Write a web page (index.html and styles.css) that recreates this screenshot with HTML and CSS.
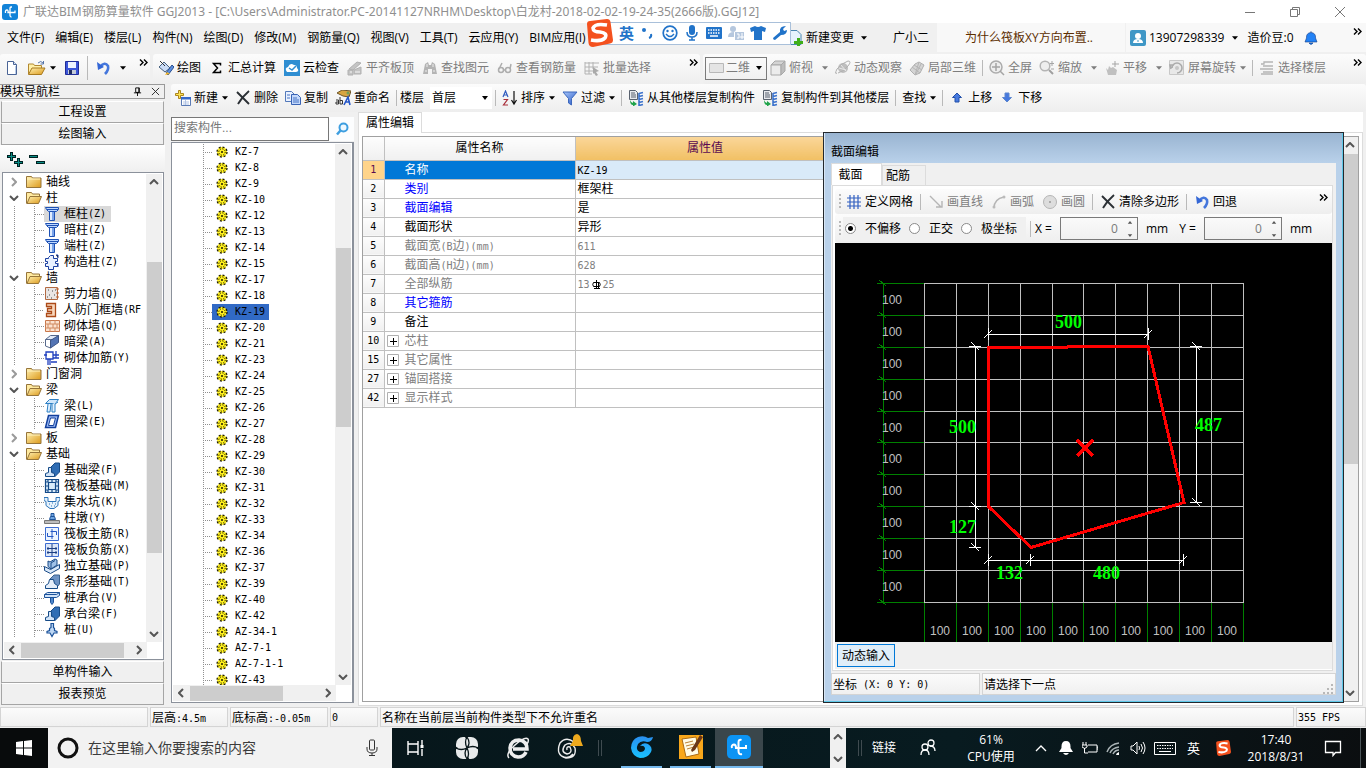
FILE: index.html
```html
<!DOCTYPE html>
<html lang="zh-CN">
<head>
<meta charset="utf-8">
<meta name="viewport" content="width=device-width, initial-scale=1">
<title>广联达BIM钢筋算量软件 GGJ2013</title>
<link rel="stylesheet" href="styles.css">
</head>
<body>
<svg class="defs" aria-hidden="true">
  <defs>
    <linearGradient id="gold" x1="0" y1="0" x2="1" y2="1"><stop offset="0" stop-color="#fff0b0"/><stop offset="1" stop-color="#dc9a1c"/></linearGradient>
    <linearGradient id="blue" x1="0" y1="0" x2="1" y2="1"><stop offset="0" stop-color="#a9c8fb"/><stop offset="1" stop-color="#2455c4"/></linearGradient>
    <linearGradient id="swirl" x1="0" y1="0" x2="0" y2="1"><stop offset="0" stop-color="#2a8ff0"/><stop offset="1" stop-color="#19c3ff"/></linearGradient>
  </defs>
  <symbol id="logo" viewBox="0 0 16 16"><rect width="16" height="16" rx="3" fill="#1283d8"/><path d="M10 3H9Q8 3 8 4V11.500Q8 13 9.500 13M3.500 9Q3 6 5 6Q6.500 6 6 8.500H13V6.500" fill="none" stroke="#fff" stroke-width="1.300"/></symbol>
  <symbol id="down" viewBox="0 0 7 4"><path d="M0 0h7L3.500 4z" fill="currentColor"/></symbol>
  <symbol id="more" viewBox="0 0 9 7"><path d="M1 .5l3 3-3 3M5 .5l3 3-3 3" fill="none" stroke="#000" stroke-width="1.400"/></symbol>
  <symbol id="chev-up" viewBox="0 0 10 6"><path d="M1 5l4-4 4 4" fill="none" stroke="#555" stroke-width="2"/></symbol>
  <symbol id="chev-down" viewBox="0 0 10 6"><path d="M1 1l4 4 4-4" fill="none" stroke="#555" stroke-width="2"/></symbol>
  <symbol id="chev-left" viewBox="0 0 6 10"><path d="M5 1L1 5l4 4" fill="none" stroke="#555" stroke-width="2"/></symbol>
  <symbol id="chev-right" viewBox="0 0 6 10"><path d="M1 1l4 4-4 4" fill="none" stroke="currentColor" stroke-width="2"/></symbol>
  <symbol id="new" viewBox="0 0 16 16"><path d="M3.500 1.500h6l3 3v10h-9z" fill="#fff" stroke="#4a6496"/><path d="M9.500 1.500v3h3" fill="#d6e3f7" stroke="#4a6496"/><path d="M11.500 6v8" stroke="#b9cce8"/></symbol>
  <symbol id="open" viewBox="0 0 18 16"><path d="M.5 14V4h5l1 1.500h7V8" fill="#fff0a8" stroke="#b28830"/><path d="M.5 14.500L4 8h13l-3.500 6.500z" fill="url(#gold)" stroke="#a87a20"/><path d="M10 3q3-3 5 0M15.500 1v3h-3" fill="none" stroke="#5674a8"/></symbol>
  <symbol id="save" viewBox="0 0 16 16"><path d="M1.500 1.500h13v13h-13z" fill="#3b55d8" stroke="#202c98"/><path d="M4 2h8v6H4z" fill="#eef3ff"/><path d="M4 10h8v4H4z" fill="#c4cbd8"/><path d="M5 10h3v4H5z" fill="#202c60"/></symbol>
  <symbol id="undo" viewBox="0 0 16 16"><path d="M5 7Q10 1 13 6Q14 10 10 14" fill="none" stroke="#4577dc" stroke-width="2.600"/><path d="M2 2l1 8 6-3z" fill="#3467d6"/></symbol>
  <symbol id="draw" viewBox="0 0 16 16"><path d="M1 7l5-5 6 6-5 4z" fill="#cbdcf6" stroke="#47617f"/><path d="M2 1l5 5" stroke="#333"/><path d="M8 13l6-8 2 2-6 8z" fill="#5b8fe0" stroke="#2a4f90"/><path d="M7 15l2-3 3 2z" fill="#f5b524"/></symbol>
  <symbol id="sigma" viewBox="0 0 16 16"><path d="M11.500 5.500V3.500h-7l4 4.500-4 4.500h7v-2" fill="none" stroke="#000" stroke-width="1.500"/></symbol>
  <symbol id="cloud" viewBox="0 0 16 16"><path d="M0 0h16v16H0z" fill="#2f8ed2"/><path d="M3 12Q0 8 4 7Q6 2 10 5Q13 5 13 8Q16 11 12 12z" fill="#fff"/><path d="M5 8l3 2 4-4" fill="none" stroke="#2f8ed2" stroke-width="1.500"/></symbol>
  <symbol id="align" viewBox="0 0 16 16"><path d="M2 9l8-7 4 1-8 7zM1 10h5v5H1zM7 10l7-3v7H7z" fill="#c4c4c4" stroke="#b0b0b0"/><path d="M8 12h5M3 12h2" stroke="#f4f4f4"/></symbol>
  <symbol id="bino" viewBox="0 0 16 16"><path d="M3 4l3-2 1 3h2l1-3 3 2 2 10h-5V9H6v5H1z" fill="#b4b4b4"/><path d="M3 11h2M11 11h2M5 4v3M11 4v3" stroke="#eee"/></symbol>
  <symbol id="glasses" viewBox="0 0 16 16"><g fill="none" stroke="#adadad" stroke-width="1.500"><circle cx="4" cy="10" r="2.500"/><circle cx="11" cy="10" r="2.500"/><path d="M2 9l3-6M13 9l1-5M6 10h3"/></g></symbol>
  <symbol id="batch" viewBox="0 0 16 16"><path d="M1 2v12M5 2v12M9 2v7M1 3h14M1 7h13M1 11h8M1 14h7" stroke="#b2b2b2" fill="none"/><path d="M9 7l6 4-3 1 2 3-2 1-2-3-1 1z" fill="#aaa"/></symbol>
  <symbol id="plane" viewBox="0 0 16 16"><path d="M1.500 3.500h14v9h-14z" fill="#e4e4e4" stroke="#b8b8b8"/></symbol>
  <symbol id="cube" viewBox="0 0 16 16"><path d="M1 5l4-4h10l-4 4z" fill="#d4d4d4" stroke="#a8a8a8"/><path d="M1 5h10v10H1z" fill="#ececec" stroke="#a8a8a8"/><path d="M11 5l4-4v10l-4 4z" fill="#bdbdbd" stroke="#a8a8a8"/></symbol>
  <symbol id="orbit" viewBox="0 0 16 16"><circle cx="8" cy="8" r="5" fill="#bebebe"/><path d="M2 13Q-1 15 2 9Q7 3 13 1Q17 1 13 6Q8 12 3 13" fill="none" stroke="#b0b0b0"/><path d="M4 8l7 2M6 5l5 6" stroke="#e8e8e8"/></symbol>
  <symbol id="part3d" viewBox="0 0 16 16"><path d="M1 10l5-6 4-2 5 3-4 8-5 2z" fill="#d4d4d4" stroke="#b0b0b0"/><path d="M3 7l8 6M5 5l8 5M10 2l-4 13M12 4l-5 10" stroke="#b4b4b4"/></symbol>
  <symbol id="full" viewBox="0 0 16 16"><circle cx="7" cy="7" r="6" fill="#eee" stroke="#acacac" stroke-width="1.500"/><path d="M7 3v8M3 7h8M11 11l4 4" stroke="#a5a5a5" stroke-width="1.500"/></symbol>
  <symbol id="zoomi" viewBox="0 0 16 16"><circle cx="6" cy="6" r="4.800" fill="#eee" stroke="#b4b4b4" stroke-width="1.500"/><path d="M10 10l4 4" stroke="#a0a0a0" stroke-width="2"/><path d="M13 1v5M11 3.500h4M12 9h3" stroke="#a5a5a5"/></symbol>
  <symbol id="pan" viewBox="0 0 16 16"><path d="M2 8l2 2 1-4 2 2 2-1 4 3-1 5H4z" fill="#c0c0c0"/><path d="M11 1v6M8 4h7" stroke="#a5a5a5"/></symbol>
  <symbol id="rot" viewBox="0 0 16 16"><path d="M.5.500h14v14H.5z" fill="#e8e8e8" stroke="#c8c8c8"/><path d="M3 8a5 5 0 1 1 5 5M2 9l-1-4h4" fill="none" stroke="#ababab" stroke-width="1.600"/><circle cx="8" cy="8" r="2" fill="#c6c6c6"/></symbol>
  <symbol id="floors" viewBox="0 0 16 16"><path d="M2 4h3V2h9M4 6h10M1 9h4M4 9h10M4 12h10M2 14h12" stroke="#b5b5b5" fill="none" stroke-width="1.300"/></symbol>
  <symbol id="create" viewBox="0 0 16 16"><path d="M6.500 7.500h9v8h-9z" fill="#fff" stroke="#5b7bb5"/><path d="M6 7h10v2.500H6z" fill="#3568cb"/><path d="M8 12h6M8 14h6M10.500 10v5" stroke="#b3c5e5"/><path d="M3.500.500h2v3h3v2h-3v3h-2v-3h-3v-2h3z" fill="#ffe454" stroke="#aa841d"/></symbol>
  <symbol id="cross" viewBox="0 0 16 16"><path d="M2 2l12 12M14 1Q7 7 3 14" stroke="#2b3035" stroke-width="1.900" fill="none"/></symbol>
  <symbol id="copy" viewBox="0 0 16 16"><path d="M.5 1.500h6l3 3v7h-9z" fill="#e9f1ff" stroke="#5379ba"/><path d="M6.500 4.500h6l3 3v7h-9z" fill="#c3d8fb" stroke="#3963b4"/><path d="M8 8h4M8 10h6M8 12h6M2 5h3M2 8h3" stroke="#4974c4"/></symbol>
  <symbol id="rename" viewBox="0 0 16 16"><path d="M2 3l5-3 9 1-2 6-6-1z" fill="#d8a541" stroke="#6d5528"/><circle cx="13" cy="3" r="1.500" fill="#70a058"/><path d="M1 10h2.500v4H1v-2h2.500M5 7v7h2.500v-3.500H5" fill="none" stroke="#333"/><path d="M9 15l4-8 2 8M10 12h5" fill="none" stroke="#2456c8" stroke-width="1.600"/></symbol>
  <symbol id="az" viewBox="0 0 16 16"><path d="M1 7l2.500-6L6 7M2 5h3" fill="none" stroke="#315cc0" stroke-width="1.200"/><path d="M1.500 9.500h4L1.500 15H6" fill="none" stroke="#a92f3b" stroke-width="1.200"/><path d="M12 1v12M9.500 10l2.500 4 2.500-4" fill="none" stroke="#111" stroke-width="1.200"/></symbol>
  <symbol id="funnel" viewBox="0 0 16 16"><path d="M1 2h14L9.500 8.500V15l-3-2V8.500z" fill="url(#blue)" stroke="#3c68bd"/></symbol>
  <symbol id="fcopy" viewBox="0 0 16 16"><path d="M1.500.500h6l2 2v7h-8z" fill="#e8eaee" stroke="#59616e"/><path d="M3 3h4M3 5h5M3 7h5" stroke="#59616e"/><path d="M11 3.500l4-1M11 6.500l4-1M11 9.500l4-1M11 12.500l4-1M11 15.500l4-1M11 3v13" stroke="#3d73cc" stroke-width="1.600" fill="none"/><path d="M2 10q1 3 3 3v-2l4 3-4 2.500v-1.500q-3 0-3-5z" fill="#1fa34a"/></symbol>
  <symbol id="arr-up" viewBox="0 0 16 16"><path d="M8 3l4.500 4.500H10V12H6V7.500H3.500z" fill="#4679df" stroke="#2250a9"/></symbol>
  <symbol id="arr-down" viewBox="0 0 16 16"><path d="M8 12l4.500-4.500H10V3H6v4.500H3.500z" fill="#4679df" stroke="#5c86ce"/></symbol>
  <symbol id="changedoc" viewBox="0 0 12 16"><path d="M-5 .5H6l4 4v10H-5z" fill="#e6f3fc" stroke="#4a86b0"/><path d="M6 8h3v3h3v3H9v2H6v-2H3v-3h3z" fill="#3fae18"/></symbol>
  <symbol id="user" viewBox="0 0 16 16"><rect width="16" height="16" rx="2" fill="#3f97c6"/><circle cx="8" cy="6" r="3" fill="#fff"/><path d="M3 13q0-4 5-4t5 4z" fill="#fff"/><path d="M8 10v2" stroke="#3f97c6"/></symbol>
  <symbol id="bellb" viewBox="0 0 16 16"><path d="M8 1v1.500Q3 3 3.500 8L2 12h12l-1.500-4Q13 3 8 2.500M6 13q2 3 4 0z" fill="#2382f5" stroke="#123c88" stroke-width=".6"/></symbol>
  <symbol id="search" viewBox="0 0 16 16"><circle cx="9.500" cy="6.500" r="4" fill="#eef8ff" stroke="#3d9ee0" stroke-width="2"/><path d="M6.500 9.500L3 13.500" stroke="#3d9ee0" stroke-width="2.500"/></symbol>
  <symbol id="folder" viewBox="0 0 16 14"><path d="M.5 12.500v-11h5l1 1.500h8.500v9.500z" fill="url(#gold)" stroke="#96753a"/><path d="M1 4h13" stroke="#fff3bf"/></symbol>
  <symbol id="folder-open" viewBox="0 0 16 14"><path d="M.5 12.500v-11h5l1 1.500h7v3" fill="#ffeaa0" stroke="#96753a"/><path d="M1 12.500L4 5.500h11.500l-3 7z" fill="url(#gold)" stroke="#96753a"/></symbol>
  <symbol id="col" viewBox="0 0 16 16"><path d="M1.500 1.500h13v2l-2 2h-8l-2-2z" fill="#bcd7ff" stroke="#1e51b4"/><path d="M5.500 5.500h5v9h-5z" fill="#dfecff" stroke="#1e51b4"/><path d="M3 3.500h11" stroke="#1e51b4"/><path d="M9 6v8" stroke="#7aa4ea" stroke-width="2"/></symbol>
  <symbol id="gcol" viewBox="0 0 16 16"><path d="M4.500 3.500l2-2h3v3h4v3h-2v2h2v3h-4v3h-5v-3h-3v-3h2v-2h-2v-3h3z" fill="#e8f1ff" stroke="#1b3fa0"/><path d="M12 1h2v3M14 9v4" stroke="#1b3fa0"/></symbol>
  <symbol id="wall" viewBox="0 0 16 16"><path d="M1.500 1.500h12v12h-12z" fill="#e9e5e3" stroke="#b26a42"/><path d="M4 4h1M8 5h1M10 9h1M5 9h1M7 12h1M11 4h1M3 11h1" stroke="#444"/><path d="M12 3h3M12 7h3M12 11h3" stroke="#c0602c"/></symbol>
  <symbol id="door" viewBox="0 0 16 16"><path d="M3.500 1.500h9v13h-9v-3h5v-2h-4v-3h4v-2h-5z" fill="#f8d7bd" stroke="#ac4a18" stroke-width="1.300"/></symbol>
  <symbol id="brick" viewBox="0 0 16 16"><path d="M1.500 2.500h14v11h-14z" fill="#fbe2cf" stroke="#c8774a"/><path d="M1 6h15M1 10h15M6 2v4M11 2v4M4 6v4M9 6v4M13 6v4M6 10v4M11 10v4" stroke="#d08a60"/></symbol>
  <symbol id="beam2" viewBox="0 0 16 16"><path d="M1.500 5.500l5-4h8l-4 4z" fill="#dfe9f8" stroke="#56698c"/><path d="M1.500 5.500h5v8.500l-5-2z" fill="#fff" stroke="#56698c"/><path d="M6.500 6.500l8-5v7l-8 5.500z" fill="#5374b4" stroke="#3c5586"/></symbol>
  <symbol id="rebar" viewBox="0 0 16 16"><path d="M2 2h7v7H2zM4 9v6M9 5h6M9 8h6M6 9v6M12 1v7M0 5h3M7 12h6" fill="none" stroke="#1f3fbe" stroke-width="1.300"/></symbol>
  <symbol id="beam" viewBox="0 0 16 16"><path d="M1.500 5.500l4-4h9l-3 4z" fill="#cfe6fb" stroke="#2d80c4"/><path d="M4 6l-1 8h3l1-8M8 6v8h3V6l3-2" fill="#e2f1ff" stroke="#2d80c4"/></symbol>
  <symbol id="ring" viewBox="0 0 16 16"><path d="M4.500 1.500h10l-3 12h-10z" fill="#9ab9f4" stroke="#123f9c" stroke-width="1.500"/><path d="M6.500 4h5l-2 7.500h-5z" fill="#fff" stroke="#123f9c"/></symbol>
  <symbol id="fbeam" viewBox="0 0 16 16"><path d="M6 6l5-5h4.500v9l-5 5z" fill="#2f6db4" stroke="#164b87"/><path d="M1.500 14.500v-3l3-1v-5h3v5l3 1v3z" fill="#d2e4f8" stroke="#164b87"/></symbol>
  <symbol id="strip" viewBox="0 0 16 16"><path d="M6 5l4-4h5.500v9l-4 5z" fill="#6d93c4" stroke="#3a628f"/><path d="M1.500 14.500v-3l3-2 1-4h4l1 4 3 2v3z" fill="#e6effa" stroke="#164b87"/></symbol>
  <symbol id="raft" viewBox="0 0 16 16"><path d="M1.500 1.500h13v13h-13zM4.500 4.500h7v7h-7zM1 8h3M12 8h3M8 1v3M8 12v3M4 1v3M12 1v3M4 12v3M12 12v3M1 4h3M12 4h3M1 12h3M12 12h3" fill="#d8ebfa" stroke="#144a88" stroke-width="1.200"/></symbol>
  <symbol id="pit" viewBox="0 0 16 16"><path d="M0 3.500h4v4h8v-4h4v3l-2 1v4l-4 3H6l-4-3v-4l-2-1z" fill="#e6f2fc" stroke="#2d74b9"/><path d="M5 10h1M8 9h1M11 10h1M7 12h1M10 12h1" stroke="#2d74b9"/></symbol>
  <symbol id="pier" viewBox="0 0 16 16"><path d="M.5 10.500h15v3H.5z" fill="#bcbcbc" stroke="#777"/><path d="M5.500 9.500l1-3h4l1 3zM7 3.500h3v3H7z" fill="#6ea4e0" stroke="#1e539a"/></symbol>
  <symbol id="rmain" viewBox="0 0 16 16"><path d="M1.500 1.500h13v13h-13z" fill="#edf5ff" stroke="#3d6cd0"/><path d="M3.500 7v3.500h6M6.500 5.500h6V9M8 3v10" fill="none" stroke="#2357c5"/></symbol>
  <symbol id="rneg" viewBox="0 0 16 16"><path d="M1.500 1.500h13v13h-13z" fill="#dce7f8" stroke="#3d6cd0"/><path d="M8 2v12M3 6.500h10M3 10.500h10M4 5v3M12 5v3M4 9v3M12 9v3" fill="none" stroke="#1c3f84"/></symbol>
  <symbol id="iso" viewBox="0 0 16 16"><path d="M.5 8.500l6 3 9-5v4l-9 5-6-3z" fill="#d8e8fa" stroke="#1a4a86"/><path d="M4 8.500V3l2 1 5-3 2 1v5l-6 4z" fill="#9fc1e8" stroke="#1a4a86"/><path d="M7 10V5l4-2.500" fill="none" stroke="#1a4a86"/></symbol>
  <symbol id="pilecap" viewBox="0 0 16 16"><path d="M.5 4.500l3-2h12v3l-3 2h-12z" fill="#cfe2f8" stroke="#1a5199"/><path d="M.5 4.500h12l3-2" fill="none" stroke="#1a5199"/><path d="M6.500 7.500h3v5l-1.500 2-1.500-2z" fill="#4c86cb" stroke="#1a5199"/></symbol>
  <symbol id="pile" viewBox="0 0 16 16"><path d="M7 1.500h2.500v4l1 1v2l2.500 1v1.500H10l-2 3.500-2-3.500H3V9.500l2.500-1v-2l1.500-1z" fill="#bdd7f4" stroke="#1a5199" stroke-width="1.200"/></symbol>
  <symbol id="gear" viewBox="0 0 12 12"><circle cx="6" cy="6" r="5" fill="#fff01e" stroke="#1c1a00" stroke-width="1.300" stroke-dasharray="2 1.920"/><circle cx="6" cy="6" r="3.200" fill="none" stroke="#1c1a00" stroke-width="1" stroke-dasharray="1.200 1.300"/><circle cx="6" cy="6" r="1" fill="#1c1a00"/></symbol>
  <symbol id="plusbox" viewBox="0 0 12 12"><path d="M.5.500h11v11H.5z" fill="#fff" stroke="#b0b0b0"/><path d="M3 6.500h7M6.500 3v7" stroke="#000"/></symbol>
  <symbol id="gridi" viewBox="0 0 16 16"><path d="M4 1v14M8 1v14M12 1v14M1 4h14M1 8h14M1 12h14" stroke="#315fc0" stroke-width="1.200"/></symbol>
  <symbol id="linei" viewBox="0 0 16 16"><path d="M2 2l11 11M8 13h6V7" fill="none" stroke="#b5b5b5" stroke-width="1.400"/></symbol>
  <symbol id="arci" viewBox="0 0 16 16"><path d="M3 14Q3 5 13 3" fill="none" stroke="#b5b5b5" stroke-width="1.400"/><circle cx="13" cy="3" r="1.500" fill="#bbb"/><circle cx="3" cy="13" r="1.500" fill="#bbb"/></symbol>
  <symbol id="circi" viewBox="0 0 16 16"><circle cx="8" cy="8" r="6.500" fill="#ddd" stroke="#b5b5b5"/><circle cx="8" cy="8" r="1" fill="#999"/></symbol>
  <symbol id="sogou" viewBox="0 0 28 28"><path d="M2 5q0-3 3-3L22 0q3 0 3.500 3L28 21q0 3-3 3.500L8 28q-4 0-4.500-4z" fill="#f4511e"/><path d="M22 6Q10 4 8 9q0 4 7 4q8 1 5 6-4 4-14 2" fill="none" stroke="#fff" stroke-width="3.600"/></symbol>
</svg>

<div class="app">
  <header class="titlebar">
    <svg class="i16"><use href="#logo"/></svg>
    <h1>广联达BIM钢筋算量软件 GGJ2013 - [C:\Users\Administrator.PC-20141127NRHM\Desktop\白龙村-2018-02-02-19-24-35(2666版).GGJ12]</h1>
    <div class="winbtns">
      <button aria-label="最小化"><svg viewBox="0 0 12 12"><path d="M1 6.500h10" stroke="#777" fill="none"/></svg></button>
      <button aria-label="还原"><svg viewBox="0 0 12 12"><path d="M1.500 3.500h7v7h-7zM3.500 3V1.500h7v7H9" stroke="#777" fill="none"/></svg></button>
      <button aria-label="关闭"><svg viewBox="0 0 12 12"><path d="M1 1l10 10M11 1L1 11" stroke="#777" fill="none"/></svg></button>
    </div>
  </header>

  <nav class="menubar">
    <div class="menus">
      <button>文件(F)</button><button>编辑(E)</button><button>楼层(L)</button><button>构件(N)</button><button>绘图(D)</button><button>修改(M)</button><button>钢筋量(Q)</button><button>视图(V)</button><button>工具(T)</button><button>云应用(Y)</button><button>BIM应用(I)</button>
    </div>
    <button class="tool change"><svg class="doc"><use href="#changedoc"/></svg>新建变更<svg class="dd"><use href="#down"/></svg></button>
    <button class="helper">广小二</button>
    <a class="tip" href="#">为什么筏板XY方向布置..</a>
    <div class="account">
      <button class="tool"><svg class="i16"><use href="#user"/></svg>13907298339<svg class="dd"><use href="#down"/></svg></button>
      <span>造价豆:0</span>
      <svg class="i16"><use href="#bellb"/></svg>
      <svg class="more"><use href="#more"/></svg>
    </div>
    <div class="ime">
      <svg class="ime-logo"><use href="#sogou"/></svg>
      <b>英</b>
      <svg viewBox="0 0 16 16"><circle cx="4" cy="5" r="2" fill="#2173c9"/><path d="M11 9q1 3-2 4" fill="none" stroke="#2173c9" stroke-width="2"/></svg>
      <svg viewBox="0 0 16 16"><circle cx="8" cy="8" r="6.800" fill="none" stroke="#2173c9" stroke-width="1.700"/><path d="M4 9q4 5 8 0" fill="none" stroke="#2173c9" stroke-width="1.400"/><circle cx="5.500" cy="6" r="1.200" fill="#2173c9"/><circle cx="10.500" cy="6" r="1.200" fill="#2173c9"/></svg>
      <svg viewBox="0 0 16 16"><rect x="5" y="0" width="6" height="10" rx="3" fill="#2173c9"/><path d="M3 7q0 5 5 5t5-5M8 12v3M5 15h6" fill="none" stroke="#2173c9" stroke-width="1.500"/></svg>
      <svg viewBox="0 0 16 16"><rect y="2" width="16" height="12" rx="1" fill="#2173c9"/><path d="M2 5h12M2 8h12" stroke="#fff" stroke-width="1.500" stroke-dasharray="1.500 1"/><path d="M4 11h8" stroke="#fff" stroke-width="1.500"/></svg>
      <svg viewBox="0 0 16 16"><circle cx="5" cy="4" r="3" fill="#b5c7de"/><path d="M0 12q0-5 6-5v5zM7 7h9v8H7z" fill="#b5c7de"/><path d="M9 9h2v4H9M13 9h2M13 11h2v2h-2z" fill="none" stroke="#fff"/></svg>
      <svg viewBox="0 0 16 16"><path d="M0 3l5-2q3 2 6 0l5 2-1 4-3-1v9H4V6L1 7z" fill="#2173c9"/></svg>
      <svg viewBox="0 0 16 16"><path d="M1 13l7-6q-1-6 6-6l-3 3 1 2 3-1q0 5-6 5l-6 5q-2 0-2-2z" fill="#2173c9"/></svg>
    </div>
  </nav>

  <div class="toolrow">
    <div class="toolbar quick">
      <button class="tool" aria-label="新建"><svg class="i16"><use href="#new"/></svg></button>
      <button class="tool" aria-label="打开"><svg class="i18"><use href="#open"/></svg><svg class="dd"><use href="#down"/></svg></button>
      <button class="tool" aria-label="保存"><svg class="i16"><use href="#save"/></svg></button>
      <i class="sep"></i>
      <button class="tool" aria-label="撤销"><svg class="i16"><use href="#undo"/></svg></button>
      <svg class="dd"><use href="#down"/></svg>
      <svg class="more"><use href="#more"/></svg>
    </div>
    <div class="toolbar actions">
      <button class="tool"><svg class="i16"><use href="#draw"/></svg>绘图</button>
      <button class="tool"><svg class="i16"><use href="#sigma"/></svg>汇总计算</button>
      <button class="tool"><svg class="i16"><use href="#cloud"/></svg>云检查</button>
      <button class="tool" disabled><svg class="i16"><use href="#align"/></svg>平齐板顶</button>
      <button class="tool" disabled><svg class="i16"><use href="#bino"/></svg>查找图元</button>
      <button class="tool" disabled><svg class="i16"><use href="#glasses"/></svg>查看钢筋量</button>
      <button class="tool" disabled><svg class="i16"><use href="#batch"/></svg>批量选择</button>
      <svg class="more"><use href="#more"/></svg>
    </div>
    <div class="toolbar views">
      <label class="dimbox"><svg class="i16"><use href="#plane"/></svg><select aria-label="视图维度" disabled><option>二维</option></select></label>
      <button class="tool" disabled><svg class="i16"><use href="#cube"/></svg>俯视<svg class="dd wide"><use href="#down"/></svg></button>
      <button class="tool" disabled><svg class="i16"><use href="#orbit"/></svg>动态观察</button>
      <button class="tool" disabled><svg class="i16"><use href="#part3d"/></svg>局部三维</button>
      <i class="sep"></i>
      <button class="tool" disabled><svg class="i16"><use href="#full"/></svg>全屏</button>
      <button class="tool" disabled><svg class="i16"><use href="#zoomi"/></svg>缩放<svg class="dd wide"><use href="#down"/></svg></button>
      <button class="tool" disabled><svg class="i16"><use href="#pan"/></svg>平移<svg class="dd wide"><use href="#down"/></svg></button>
      <button class="tool" disabled><svg class="i16"><use href="#rot"/></svg>屏幕旋转<svg class="dd"><use href="#down"/></svg></button>
      <i class="sep"></i>
      <button class="tool" disabled><svg class="i16"><use href="#floors"/></svg>选择楼层</button>
      <svg class="more"><use href="#more"/></svg>
    </div>
  </div>

  <main class="work">
    <aside class="nav song">
      <header class="nav-head"><h2>模块导航栏</h2>
        <button aria-label="固定"><svg viewBox="0 0 10 10"><path d="M3 1h4v5H3zM1 6.500h8M5 6v4M6.500 1v5" fill="none" stroke="#000"/></svg></button>
        <button aria-label="关闭"><svg viewBox="0 0 10 10"><path d="M1 1l8 8M9 1L1 9" stroke="#222"/></svg></button>
      </header>
      <button class="section">工程设置</button>
      <button class="section">绘图输入</button>
      <div class="expander">
        <button aria-label="全部展开"><svg viewBox="0 0 18 16"><path d="M5.500 1v9M1 5.500h9M12.500 7v9M8 11.500h9" stroke="#022" stroke-width="3"/><path d="M5.500 2v7M2 5.500h7M12.500 8v7M9 11.500h7" stroke="#0a8d86"/></svg></button>
        <button aria-label="全部折叠"><svg viewBox="0 0 18 16"><path d="M1 5.500h9M8 11.500h9" stroke="#022" stroke-width="3"/><path d="M2 5.500h7M9 11.500h7" stroke="#0a8d86"/></svg></button>
      </div>
      <div class="treebox">
        <div class="scroller">
          <ul class="tree">
            <li><div class="branch"><svg class="tog shut"><use href="#chev-right"/></svg><svg class="fold"><use href="#folder"/></svg>轴线</div></li>
            <li><div class="branch"><svg class="tog"><use href="#chev-down"/></svg><svg class="fold"><use href="#folder-open"/></svg>柱</div>
              <ul>
                <li><span class="node on"><svg class="i16"><use href="#col"/></svg>框柱<span class="m">(Z)</span></span></li>
                <li><span class="node"><svg class="i16"><use href="#col"/></svg>暗柱<span class="m">(Z)</span></span></li>
                <li><span class="node"><svg class="i16"><use href="#col"/></svg>端柱<span class="m">(Z)</span></span></li>
                <li><span class="node"><svg class="i16"><use href="#gcol"/></svg>构造柱<span class="m">(Z)</span></span></li>
              </ul></li>
            <li><div class="branch"><svg class="tog"><use href="#chev-down"/></svg><svg class="fold"><use href="#folder-open"/></svg>墙</div>
              <ul>
                <li><span class="node"><svg class="i16"><use href="#wall"/></svg>剪力墙<span class="m">(Q)</span></span></li>
                <li><span class="node"><svg class="i16"><use href="#door"/></svg>人防门框墙<span class="m">(RF</span></span></li>
                <li><span class="node"><svg class="i16"><use href="#brick"/></svg>砌体墙<span class="m">(Q)</span></span></li>
                <li><span class="node"><svg class="i16"><use href="#beam2"/></svg>暗梁<span class="m">(A)</span></span></li>
                <li><span class="node"><svg class="i16"><use href="#rebar"/></svg>砌体加筋<span class="m">(Y)</span></span></li>
              </ul></li>
            <li><div class="branch"><svg class="tog shut"><use href="#chev-right"/></svg><svg class="fold"><use href="#folder"/></svg>门窗洞</div></li>
            <li><div class="branch"><svg class="tog"><use href="#chev-down"/></svg><svg class="fold"><use href="#folder-open"/></svg>梁</div>
              <ul>
                <li><span class="node"><svg class="i16"><use href="#beam"/></svg>梁<span class="m">(L)</span></span></li>
                <li><span class="node"><svg class="i16"><use href="#ring"/></svg>圈梁<span class="m">(E)</span></span></li>
              </ul></li>
            <li><div class="branch"><svg class="tog shut"><use href="#chev-right"/></svg><svg class="fold"><use href="#folder"/></svg>板</div></li>
            <li><div class="branch"><svg class="tog"><use href="#chev-down"/></svg><svg class="fold"><use href="#folder-open"/></svg>基础</div>
              <ul>
                <li><span class="node"><svg class="i16"><use href="#fbeam"/></svg>基础梁<span class="m">(F)</span></span></li>
                <li><span class="node"><svg class="i16"><use href="#raft"/></svg>筏板基础<span class="m">(M)</span></span></li>
                <li><span class="node"><svg class="i16"><use href="#pit"/></svg>集水坑<span class="m">(K)</span></span></li>
                <li><span class="node"><svg class="i16"><use href="#pier"/></svg>柱墩<span class="m">(Y)</span></span></li>
                <li><span class="node"><svg class="i16"><use href="#rmain"/></svg>筏板主筋<span class="m">(R)</span></span></li>
                <li><span class="node"><svg class="i16"><use href="#rneg"/></svg>筏板负筋<span class="m">(X)</span></span></li>
                <li><span class="node"><svg class="i16"><use href="#iso"/></svg>独立基础<span class="m">(P)</span></span></li>
                <li><span class="node"><svg class="i16"><use href="#strip"/></svg>条形基础<span class="m">(T)</span></span></li>
                <li><span class="node"><svg class="i16"><use href="#pilecap"/></svg>桩承台<span class="m">(V)</span></span></li>
                <li><span class="node"><svg class="i16"><use href="#fbeam"/></svg>承台梁<span class="m">(F)</span></span></li>
                <li><span class="node"><svg class="i16"><use href="#pile"/></svg>桩<span class="m">(U)</span></span></li>
              </ul></li>
          </ul>
          <div class="vbar nav-v"><svg><use href="#chev-up"/></svg><i class="a"></i><i class="thumb"></i><i class="b"></i><svg><use href="#chev-down"/></svg></div>
        </div>
        <div class="hbar nav-h"><svg><use href="#chev-left"/></svg><i class="thumb"></i><i class="b"></i><svg><use href="#chev-right"/></svg></div>
      </div>
      <button class="section">单构件输入</button>
      <button class="section">报表预览</button>
    </aside>

    <section class="right">
      <div class="toolbar comp-tools">
        <button class="tool"><svg class="i16"><use href="#create"/></svg>新建<svg class="dd"><use href="#down"/></svg></button>
        <button class="tool"><svg class="i16"><use href="#cross"/></svg>删除</button>
        <button class="tool"><svg class="i16"><use href="#copy"/></svg>复制</button>
        <button class="tool"><svg class="i16"><use href="#rename"/></svg>重命名</button>
        <i class="sep"></i>
        <label class="floor">楼层<select><option>首层</option></select></label>
        <i class="sep"></i>
        <button class="tool"><svg class="i16"><use href="#az"/></svg>排序<svg class="dd"><use href="#down"/></svg></button>
        <button class="tool"><svg class="i16"><use href="#funnel"/></svg>过滤<svg class="dd"><use href="#down"/></svg></button>
        <i class="sep"></i>
        <button class="tool"><svg class="i16"><use href="#fcopy"/></svg>从其他楼层复制构件</button>
        <button class="tool"><svg class="i16"><use href="#fcopy"/></svg>复制构件到其他楼层</button>
        <i class="sep"></i>
        <button class="tool">查找<svg class="dd"><use href="#down"/></svg></button>
        <i class="sep"></i>
        <button class="tool"><svg class="i16"><use href="#arr-up"/></svg>上移</button>
        <button class="tool"><svg class="i16"><use href="#arr-down"/></svg>下移</button>
      </div>

      <div class="panes">
        <div class="components song">
          <form class="find"><input type="text" placeholder="搜索构件..." aria-label="搜索构件"><button type="button" aria-label="搜索"><svg class="i16"><use href="#search"/></svg></button></form>
          <div class="listbox">
            <div class="scroller">
              <ul class="complist m">
                <li><span><svg><use href="#gear"/></svg>KZ-7</span></li>
                <li><span><svg><use href="#gear"/></svg>KZ-8</span></li>
                <li><span><svg><use href="#gear"/></svg>KZ-9</span></li>
                <li><span><svg><use href="#gear"/></svg>KZ-10</span></li>
                <li><span><svg><use href="#gear"/></svg>KZ-12</span></li>
                <li><span><svg><use href="#gear"/></svg>KZ-13</span></li>
                <li><span><svg><use href="#gear"/></svg>KZ-14</span></li>
                <li><span><svg><use href="#gear"/></svg>KZ-15</span></li>
                <li><span><svg><use href="#gear"/></svg>KZ-17</span></li>
                <li><span><svg><use href="#gear"/></svg>KZ-18</span></li>
                <li><span class="on"><svg><use href="#gear"/></svg>KZ-19</span></li>
                <li><span><svg><use href="#gear"/></svg>KZ-20</span></li>
                <li><span><svg><use href="#gear"/></svg>KZ-21</span></li>
                <li><span><svg><use href="#gear"/></svg>KZ-23</span></li>
                <li><span><svg><use href="#gear"/></svg>KZ-24</span></li>
                <li><span><svg><use href="#gear"/></svg>KZ-25</span></li>
                <li><span><svg><use href="#gear"/></svg>KZ-26</span></li>
                <li><span><svg><use href="#gear"/></svg>KZ-27</span></li>
                <li><span><svg><use href="#gear"/></svg>KZ-28</span></li>
                <li><span><svg><use href="#gear"/></svg>KZ-29</span></li>
                <li><span><svg><use href="#gear"/></svg>KZ-30</span></li>
                <li><span><svg><use href="#gear"/></svg>KZ-31</span></li>
                <li><span><svg><use href="#gear"/></svg>KZ-32</span></li>
                <li><span><svg><use href="#gear"/></svg>KZ-33</span></li>
                <li><span><svg><use href="#gear"/></svg>KZ-34</span></li>
                <li><span><svg><use href="#gear"/></svg>KZ-36</span></li>
                <li><span><svg><use href="#gear"/></svg>KZ-37</span></li>
                <li><span><svg><use href="#gear"/></svg>KZ-39</span></li>
                <li><span><svg><use href="#gear"/></svg>KZ-40</span></li>
                <li><span><svg><use href="#gear"/></svg>KZ-42</span></li>
                <li><span><svg><use href="#gear"/></svg>AZ-34-1</span></li>
                <li><span><svg><use href="#gear"/></svg>AZ-7-1</span></li>
                <li><span><svg><use href="#gear"/></svg>AZ-7-1-1</span></li>
                <li><span><svg><use href="#gear"/></svg>KZ-43</span></li>
              </ul>
              <div class="vbar comp-v"><svg><use href="#chev-up"/></svg><i class="a"></i><i class="thumb"></i><i class="b"></i><svg><use href="#chev-down"/></svg></div>
            </div>
            <div class="hbar comp-h"><svg><use href="#chev-left"/></svg><i class="thumb"></i><i class="b"></i><svg><use href="#chev-right"/></svg></div>
          </div>
        </div>

        <div class="props song">
          <div class="tabs"><button class="tab">属性编辑</button></div>
          <div class="pane">
            <div class="gridbox">
              <table>
                <colgroup><col class="c-no"><col class="c-name"><col class="c-val"><col></colgroup>
                <thead><tr><th></th><th>属性名称</th><th class="hot">属性值</th><th></th></tr></thead>
                <tbody>
                  <tr class="cur"><th class="m">1</th><td class="name">名称</td><td><span class="m">KZ-19</span></td><td></td></tr>
                  <tr><th class="m">2</th><td class="name key">类别</td><td>框架柱</td><td></td></tr>
                  <tr><th class="m">3</th><td class="name key">截面编辑</td><td>是</td><td></td></tr>
                  <tr><th class="m">4</th><td class="name">截面形状</td><td>异形</td><td></td></tr>
                  <tr class="off"><th class="m">5</th><td class="name">截面宽<span class="m">(B</span>边<span class="m">)(mm)</span></td><td><span class="m">611</span></td><td></td></tr>
                  <tr class="off"><th class="m">6</th><td class="name">截面高<span class="m">(H</span>边<span class="m">)(mm)</span></td><td><span class="m">628</span></td><td></td></tr>
                  <tr class="off"><th class="m">7</th><td class="name">全部纵筋</td><td><span class="m">13</span><svg class="steel" viewBox="0 0 13 11"><path d="M6.500 1v9M8.500 3v6M3.500 3.500h6q1.500 2 0 4h-6q-1.500-2 0-4M4 9.500h6" fill="none" stroke="#000"/></svg><span class="m">25</span></td><td></td></tr>
                  <tr><th class="m">8</th><td class="name key">其它箍筋</td><td></td><td></td></tr>
                  <tr><th class="m">9</th><td class="name">备注</td><td></td><td></td></tr>
                  <tr class="off"><th class="m">10</th><td class="group"><svg><use href="#plusbox"/></svg>芯柱</td><td></td><td></td></tr>
                  <tr class="off"><th class="m">15</th><td class="group"><svg><use href="#plusbox"/></svg>其它属性</td><td></td><td></td></tr>
                  <tr class="off"><th class="m">27</th><td class="group"><svg><use href="#plusbox"/></svg>锚固搭接</td><td></td><td></td></tr>
                  <tr class="off"><th class="m">42</th><td class="group"><svg><use href="#plusbox"/></svg>显示样式</td><td></td><td></td></tr>
                </tbody>
              </table>
              <div class="vbar prop-v"><svg><use href="#chev-up"/></svg><i class="thumb"></i><i class="b"></i><svg><use href="#chev-down"/></svg></div>
            </div>
          </div>
        </div>
      </div>
    </section>

    <section class="dialog" role="dialog" aria-label="截面编辑">
      <h2>截面编辑</h2>
      <div class="client">
        <div class="dtabs song"><button class="dtab on">截面</button><button class="dtab">配筋</button></div>
        <div class="dpane">
          <div class="toolbar dtools">
            <i class="grip"></i>
            <button class="tool"><svg class="i16"><use href="#gridi"/></svg>定义网格</button><i class="sep"></i>
            <button class="tool" disabled><svg class="i16"><use href="#linei"/></svg>画直线</button>
            <button class="tool" disabled><svg class="i16"><use href="#arci"/></svg>画弧</button>
            <button class="tool" disabled><svg class="i16"><use href="#circi"/></svg>画圆</button><i class="sep"></i>
            <button class="tool"><svg class="i16"><use href="#cross"/></svg>清除多边形</button><i class="sep"></i>
            <button class="tool"><svg class="i16"><use href="#undo"/></svg>回退</button>
            <svg class="more"><use href="#more"/></svg>
          </div>
          <div class="toolbar offsets">
            <i class="grip"></i>
            <div class="radios song">
              <label><input type="radio" name="ofs" checked>不偏移</label>
              <label><input type="radio" name="ofs">正交</label>
              <label><input type="radio" name="ofs">极坐标</label>
            </div>
            <i class="sep"></i>
            <label class="coord">X = <span class="spin"><input type="text" value="0"><svg viewBox="0 0 5 18"><path d="M0 3l2.500-3L5 3zM0 15l2.500 3L5 15z" fill="#555"/></svg></span>mm</label>
            <label class="coord">Y = <span class="spin"><input type="text" value="0"><svg viewBox="0 0 5 18"><path d="M0 3l2.500-3L5 3zM0 15l2.500 3L5 15z" fill="#555"/></svg></span>mm</label>
          </div>
          <div class="canvas">
            <svg viewBox="835 243 497 399" preserveAspectRatio="xMidYMid slice">
              <g fill="none" shape-rendering="crispEdges">
                <path stroke="#008000" d="M883.500 283v320M877 283.500h47M877 315.500h47M877 347.500h47M877 379.500h47M877 411.500h47M877 442.500h47M877 474.500h47M877 506.500h47M877 538.500h47M877 570.500h47M877 602.500h47M924.500 602v40M956.500 602v40M988.500 602v40M1020.500 602v40M1052.500 602v40M1083.500 602v40M1115.500 602v40M1147.500 602v40M1179.500 602v40M1211.500 602v40M1243.500 602v40"/>
                <path stroke="#008000" d="M879 280l7 6M879 312l7 6M879 344l7 6M879 376l7 6M879 408l7 6M879 439l7 6M879 471l7 6M879 503l7 6M879 535l7 6M879 567l7 6M879 599l7 6"/>
                <path stroke="#c0c0c0" d="M924 283.500h320M924 315.500h320M924 347.500h320M924 379.500h320M924 411.500h320M924 442.500h320M924 474.500h320M924 506.500h320M924 538.500h320M924 570.500h320M924 602.500h320M924.500 283v320M956.500 283v320M988.500 283v320M1020.500 283v320M1052.500 283v320M1083.500 283v320M1115.500 283v320M1147.500 283v320M1179.500 283v320M1211.500 283v320M1243.500 283v320"/>
                <path stroke="#fff" d="M988 334.500h160M988.500 328v12M1148.500 328v12M984 338l8-8M1144 338l8-8M975.500 346v201M969 346.500h12M969 506.500h12M969 547.500h12M971 342l8 8M971 502l8 8M971 543l8 8M1196.500 346v156M1190 346.500h12M1190 502.500h12M1192 342l8 8M1192 498l8 8M988 560.500h195M988.500 554v12M1030.500 554v12M1183.500 554v12M984 564l8-8M1026 564l8-8M1179 564l8-8"/>
                <path stroke="#f00" stroke-width="3" d="M988.500 347.500H1068M1067 346.500h81l36 156-153 45-42.500-41V346"/>
                <path stroke="#f00" stroke-width="3" d="M1077 440l16 16M1093 440l-16 16"/>
              </g>
              <g class="steps"><text x="882" y="304">100</text><text x="882" y="336">100</text><text x="882" y="368">100</text><text x="882" y="400">100</text><text x="882" y="432">100</text><text x="882" y="463">100</text><text x="882" y="495">100</text><text x="882" y="527">100</text><text x="882" y="559">100</text><text x="882" y="591">100</text>
              <text x="930" y="635">100</text><text x="962" y="635">100</text><text x="994" y="635">100</text><text x="1026" y="635">100</text><text x="1058" y="635">100</text><text x="1089" y="635">100</text><text x="1121" y="635">100</text><text x="1153" y="635">100</text><text x="1185" y="635">100</text><text x="1217" y="635">100</text></g>
              <g class="dims"><text x="1055" y="328">500</text><text x="949" y="433">500</text><text x="949" y="533">127</text><text x="996" y="579">132</text><text x="1093" y="579">480</text><text x="1195" y="431">487</text></g>
            </svg>
          </div>
          <div class="dfoot"><button class="dyn">动态输入</button></div>
        </div>
        <footer class="dstatus song"><span>坐标 <span class="m">(X: 0 Y: 0)</span></span><span>请选择下一点<svg class="size" viewBox="0 0 10 10"><path d="M8 0h2v2H8zM4 4h2v2H4zM8 4h2v2H8zM0 8h2v2H0zM4 8h2v2H4zM8 8h2v2H8z" fill="#b8b8b8"/></svg></span></footer>
      </div>
    </section>
  </main>

  <footer class="status song">
    <span></span><span>层高<span class="m">:4.5m</span></span><span>底标高<span class="m">:-0.05m</span></span><span class="m">0</span><span>名称在当前层当前构件类型下不允许重名</span><span class="m">355 FPS</span>
  </footer>

  <footer class="taskbar">
    <button class="start" aria-label="开始"><svg viewBox="0 0 16 16"><path d="M0 2l7-1v6.500H0zM8 1l8-1v7.500H8zM0 8.500h7V15l-7-1zM8 8.500h8V16l-8-1z" fill="#fff"/></svg></button>
    <label class="cortana"><svg viewBox="0 0 22 22"><circle cx="11" cy="11" r="9" fill="none" stroke="#111" stroke-width="3"/></svg><input type="text" placeholder="在这里输入你要搜索的内容"><svg class="mic" viewBox="0 0 12 18"><rect x="3.500" y="1" width="5" height="10" rx="1" fill="none" stroke="#333"/><path d="M1 8v2q0 4 5 4t5-4V8M6 14v3M3 16.500h6" fill="none" stroke="#333"/></svg></label>
    <div class="apps">
      <button aria-label="任务视图"><svg viewBox="0 0 24 24"><path d="M4 5v3h10V5M4 19v-3h10v3M4 8v8h10V8zM18 4v5M18 13v7" fill="none" stroke="#fff" stroke-width="1.400"/><path d="M16.500 9h3v3h-3z" fill="#fff"/></svg></button>
      <button aria-label="四叶草"><svg viewBox="0 0 24 24"><rect x="1" y="1" width="22" height="22" rx="7" fill="#e8eaeb"/><path d="M12 12Q9 6 12 1M12 12Q18 9 23 12M12 12Q15 18 12 23M12 12Q6 15 1 12M12 12Q16 7 12 1M12 12Q8 17 12 23" fill="none" stroke="#071519" stroke-width="1.300"/><path d="M9 0h4l-1.500 3zM24 10v4l-3-2zM11 24h4l-2-3zM0 10v4l3-2z" fill="#071519"/></svg></button>
      <button aria-label="浏览器"><svg viewBox="0 0 24 24"><path d="M20 16q-2 5-8 5-8-1-8-9 1-8 9-8 8 1 8 9H7" fill="none" stroke="#eee" stroke-width="3.500"/><path d="M3 22q-4-4 6-13Q19 0 22 3q1 2-1 5" fill="none" stroke="#eee" stroke-width="1.500"/></svg></button>
      <button aria-label="广联达助手"><svg class="big" viewBox="0 0 28 28"><path d="M19 8Q11 2 5 9q-5 12 6 15 11 0 9-10-4-7-10-3-5 7 2 9 6-1 3-7-4-1-3 3M18 20q-5 6-11 2" fill="none" stroke="#eee" stroke-width="1.400"/><path d="M22 0q-5 1-4 7l-3 5h13l-2-5q0-6-4-7z" fill="#eda91e"/></svg></button>
      <i class="tsep"></i>
      <button class="run" aria-label="广联达"><svg viewBox="0 0 24 24"><path d="M23 2q-1 5-6 5-6-2-9 2-3 6 2 8 5 0 5-4-1-3-5-2 3-4 8-2 5 3 3 8-3 6-11 6-8-2-9-10 0-8 7-11 6-2 10 1z" fill="url(#swirl)"/></svg></button>
      <button class="run" aria-label="记事本"><svg viewBox="0 0 24 24"><path d="M0 0h24v24H0z" fill="#f8a71b"/><path d="M3 4l14-2 3 17-13 3z" fill="#fffbe6" stroke="#ab6b13"/><path d="M6 8l8-2M7 11l8-2M8 14l7-2" stroke="#bb8136"/><path d="M21 0l-9 15 1 2 3-2 8-13z" fill="#6a3718"/></svg></button>
      <button class="run active" aria-label="GGJ2013"><svg viewBox="0 0 24 24"><rect width="24" height="24" rx="5" fill="#0c94f4"/><path d="M14.500 5q-3-1-3 2.500V16q0 4 3.500 3M5 13q-1-3 2-3.500 2 0 2 3.500h10v-3" fill="none" stroke="#fff" stroke-width="2"/></svg></button>
    </div>
    <div class="taskscroll"><svg><use href="#chev-up"/></svg><svg><use href="#chev-down"/></svg></div>
    <div class="tray">
      <i class="tsep"></i><span class="links">链接</span>
      <svg class="t18" viewBox="0 0 18 18"><g fill="none" stroke="#fff" stroke-width="1.300"><circle cx="6" cy="8" r="3"/><path d="M2 16q0-5 4-5t4 5"/><circle cx="12" cy="4" r="3"/><path d="M11 7q5 0 5 5"/></g></svg>
      <span class="two cpu">61%<br>CPU使用</span>
      <svg class="t12" viewBox="0 0 12 12"><path d="M1 9l5-5 5 5" fill="none" stroke="#fff" stroke-width="1.300"/></svg>
      <svg class="t16" viewBox="0 0 16 16"><path d="M8 1Q3 1 3.500 8L1 12h14l-2.500-4Q13 1 8 1M5 13q3 4 6 0z" fill="#fff"/></svg>
      <svg class="t16" viewBox="0 0 16 16"><path d="M6 5h9v7H6M15 7h1v3M1 2v3M4 2v3M0 5h5v2q-2 3-5 0zM2.500 8v5H6" fill="none" stroke="#fff"/></svg>
      <svg class="t16" viewBox="0 0 16 16"><path d="M1 12Q4 4 13 3M4 13q2-5 9-6M7 14q2-4 6-4" fill="none" stroke="#aab4b6" stroke-width="1.500"/><path d="M10 15q0-2 3-3v3z" fill="#fff"/></svg>
      <svg class="t16" viewBox="0 0 16 16"><path d="M1 6h2l4-4v12L3 10H1zM9 6q1 2 0 4M11 4q3 4 0 8M13 2q4 6 0 12" fill="none" stroke="#fff"/></svg>
      <svg class="kb" viewBox="0 0 22 13"><path d="M.5.500h21v12H.5z" fill="none" stroke="#fff"/><path d="M3 3.500h16M3 6.500h16" stroke="#fff" stroke-dasharray="1.500 1"/><path d="M5 9.500h12" stroke="#fff"/></svg>
      <span class="lang">英</span>
      <svg class="t16"><use href="#sogou"/></svg>
      <span class="two clock">17:40<br>2018/8/31</span>
      <svg class="t18" viewBox="0 0 18 18"><path d="M1.500 2.500h15v11h-5L9 16.500v-3H1.500z" fill="none" stroke="#fff" stroke-width="1.300"/></svg>
      <i class="desk"></i>
    </div>
  </footer>
</div>
</body>
</html>
```
FILE: styles.css
```css
* { box-sizing: border-box; }

body {
  margin: 0;
  background: #f0f0f0;
  color: #000;
  font: 12px/16px "Open Sans", "Noto Sans CJK SC", sans-serif;
}

button, input, select { font: inherit; color: inherit; margin: 0; }
button { border: 0; background: none; padding: 0; white-space: nowrap; }
h1, h2 { margin: 0; font: inherit; white-space: nowrap; }
ul { list-style: none; margin: 0; padding: 0; }
svg { flex: none; display: block; }
.defs { position: absolute; width: 0; height: 0; }

.song { font-family: "Liberation Sans", "Noto Sans CJK SC", sans-serif; }
.m { font-family: "DejaVu Sans Mono", monospace; font-size: 10px; }

.i16 { width: 16px; height: 16px; }
.i18 { width: 18px; height: 16px; }
.dd { width: 6px; height: 4px; margin-left: 1px; }
.dd.wide { margin-left: 6px; }
.more { width: 9px; height: 7px; margin: 0 4px 12px auto; }

.app { display: flex; flex-direction: column; height: 100vh; overflow: hidden; }

/* Title bar */
.titlebar { display: flex; align-items: center; gap: 5px; height: 23px; padding-left: 2px; background: #fff; color: #8f8f8f; }
.titlebar h1 { font-family: "Noto Sans", "Noto Sans CJK SC", sans-serif; }
.winbtns { display: flex; margin-left: auto; gap: 33px; padding-right: 20px; }
.winbtns svg { width: 12px; height: 12px; }

/* Menu bar */
.menubar { position: relative; display: flex; align-items: center; height: 31px; flex: none; padding-bottom: 2px; }
.menus { display: flex; gap: 11px; padding-left: 7px; width: 791px; flex: none; }
.doc { width: 12px; height: 16px; }
.change { width: 102px; }
.change .dd { margin-left: 4px; }
.helper { width: 44px; text-align: left; }
.tip { flex: 0 1 188px; height: 29px; padding-left: 28px; line-height: 29px; background: #f8f8f8; color: #5c2e00; text-decoration: none; white-space: nowrap; }
.account { flex: 1; display: flex; align-items: center; gap: 9px; height: 29px; padding-left: 4px; background: #f8f8f8; margin-left: 1px; white-space: nowrap; }
.account .dd { margin-left: 5px; }
.ime { position: absolute; z-index: 1; left: 585px; top: -3px; display: flex; align-items: center; gap: 6px; height: 26px; width: 206px; color: #2173c9; }
.ime::before { content: ""; position: absolute; z-index: -1; inset: 2px 0 1px 14px; border: 1px solid #a9c0da; background: #fff; }
.ime svg { width: 16px; height: 16px; }
.ime .ime-logo { width: 28px; height: 28px; }
.ime b { font-size: 15px; }

/* Toolbars */
.toolrow { display: flex; gap: 3px; height: 30px; flex: none; }
.toolbar { display: flex; align-items: center; gap: 8px; border-radius: 3px; background: linear-gradient(#fcfcfc, #eee); }
.toolrow .toolbar { padding-bottom: 2px; }
.tool { display: flex; align-items: center; gap: 3px; flex: none; }
.tool:disabled { color: #7d7d7d; }
.sep { flex: none; width: 1px; height: 16px; margin: 0 -1px; background: #b9b9b9; }
.quick { flex: 0 0 150px; padding-left: 4px; }
.quick .sep { height: 24px; }
.quick .more, .actions .more { margin-right: 2px; }
.actions { flex: 0 0 547px; padding-left: 5px; }
.views { flex: 1; gap: 7px; padding-left: 2px; }
.dimbox { display: flex; align-items: center; width: 62px; height: 23px; padding-left: 2px; margin-right: -4px; border: 1px solid #7a7a7a; }
select { appearance: none; border: 0; border-radius: 0; background: url("data:image/svg+xml,%3Csvg xmlns='http://www.w3.org/2000/svg' width='6' height='4'%3E%3Cpath d='M0 0h6L3 4z'/%3E%3C/svg%3E") no-repeat right 4px center; }
.dimbox select { flex: 1; min-width: 0; padding: 0 0 0 2px; color: #7d7d7d; opacity: 1; }

/* Work area */
.work { position: relative; flex: 1; min-height: 0; display: flex; gap: 6px; }
.nav { flex: 0 0 165px; min-width: 0; display: flex; flex-direction: column; padding-bottom: 1px; }
.nav-head { display: flex; align-items: center; height: 15px; margin-bottom: 2px; border: 1px solid #9a9a9a; border-left: 0; }
.nav-head h2 { flex: 1; }
.nav-head button { width: 18px; }
.nav-head svg { width: 9px; height: 9px; margin: auto; }
.section { flex: none; height: 22px; margin: 0 1px; border: 1px solid #a5a5a5; border-top-color: #fff; background: #f0f0f0; }
.expander { display: flex; align-items: center; gap: 4px; height: 27px; padding-left: 6px; background: linear-gradient(#fff, #efefef); flex: none; }
.expander svg { width: 18px; height: 16px; }
.treebox { flex: 1; min-height: 0; display: flex; flex-direction: column; margin: 0 1px 1px 2px; padding: 1px; border: 1px solid #8b919b; background: #fff; }
.scroller { flex: 1; min-height: 0; display: flex; overflow: hidden; }
.tree { flex: 1; min-width: 0; overflow: hidden; line-height: 16px; white-space: nowrap; }
.branch { display: flex; align-items: center; height: 16px; padding-left: 5px; }
.tog { width: 10px; height: 6px; margin-right: 7px; }
.tog.shut { width: 6px; height: 10px; margin: 0 9px 0 2px; color: #9a9a9a; }
.fold { width: 16px; height: 14px; margin-right: 4px; }
.tree ul {
  padding-left: 30px;
  background:
    linear-gradient(#909090 50%, transparent 50%) 10px 0 / 1px 2px repeat-y,
    linear-gradient(#909090 50%, transparent 50%) 30px 0 / 1px 2px repeat-y;
}
.tree ul li { display: flex; align-items: center; height: 16px; }
.tree ul li::before { content: ""; width: 10px; border-top: 1px dotted #909090; }
.node { display: flex; align-items: center; height: 16px; padding-right: 5px; }
.node .i16 { margin-right: 4px; }
.node.on { background: #d9d9d9; }

/* Scroll bars */
.vbar, .hbar { flex: 0 0 16px; display: flex; align-items: center; background: #f0f0f0; }
.vbar { flex-direction: column; padding: 5px 0; }
.hbar { padding: 0 5px; }
.vbar svg { width: 10px; height: 6px; }
.hbar svg { width: 6px; height: 10px; color: #555; }
.vbar svg:first-child { margin-bottom: 6px; }
.vbar svg:last-child { margin-top: 6px; }
.hbar svg:first-child { margin-right: 6px; }
.hbar svg:last-child { margin-left: 6px; }
.thumb { background: #cdcdcd; }
.vbar .thumb { width: 15px; }
.hbar .thumb { height: 15px; }
.nav-v .a { flex: 71; } .nav-v .thumb { flex: 292; } .nav-v .b { flex: 72; }
.nav-h { margin-right: 15px; }
.nav-h .thumb { flex: 102; } .nav-h .b { flex: 6; }
.comp-v .a { flex: 87; } .comp-v .thumb { flex: 180; } .comp-v .b { flex: 242; }
.comp-h { margin-right: 15px; }
.comp-h .thumb { flex: 92; } .comp-h .b { flex: 36; }
.prop-v .thumb { flex: 309; } .prop-v .b { flex: 220; }

.right { flex: 1; min-width: 0; display: flex; flex-direction: column; }
.comp-tools { flex: none; gap: 7px; height: 28px; padding-left: 4px; }
.floor { display: flex; align-items: center; gap: 6px; margin: 0 -3px; }
.floor select { width: 62px; height: 22px; padding: 0 2px; background-color: #fff; }
.panes { flex: 1; min-height: 0; display: flex; gap: 4px; }

/* Component list */
.components { flex: 0 0 183px; display: flex; flex-direction: column; padding-bottom: 3px; }
.find { display: flex; height: 24px; margin: 5px 0 1px; }
.find input { width: 158px; padding: 0 2px 2px; border: 1px solid #777; background: #fff; }
.find input::placeholder { color: #777; }
.find button { flex: 1; display: grid; place-items: center; background: #fcfdfe; }
.listbox { flex: 1; min-height: 0; display: flex; flex-direction: column; padding: 1px; border: 1px solid #8b919b; border-right-width: 2px; background: #fff; }
.complist { flex: 1; overflow: hidden; padding-left: 30px; background: linear-gradient(#909090 50%, transparent 50%) 30px 0 / 1px 2px repeat-y; white-space: nowrap; }
.complist li { display: flex; align-items: center; height: 16px; }
.complist li::before { content: ""; width: 9px; border-top: 1px dotted #909090; }
.complist span { display: flex; align-items: center; gap: 7px; height: 16px; padding: 0 4px; line-height: 16px; }
.complist svg { width: 12px; height: 12px; }
.complist .on { background: #316ac5; }

/* Property grid */
.props { flex: 1; min-width: 0; display: flex; flex-direction: column; margin-right: 3px; }
.tabs { display: flex; height: 21px; background: #fff; }
.tab { width: 64px; background: #fff; border: 1px solid #dcdcdc; border-bottom: 0; }
.tabs::after { content: ""; flex: 1; border-bottom: 1px solid #dcdcdc; }
.pane { flex: 1; min-height: 0; padding: 3px; background: #fff; border: 1px solid #dcdcdc; border-top: 0; display: flex; }
.gridbox { flex: 1; display: flex; align-items: flex-start; border: 1px solid #a0a0a0; background: #fff; }
.gridbox .vbar { align-self: stretch; }
table { flex: 1; border-collapse: collapse; table-layout: fixed; width: 0; }
.c-no { width: 21px; }
.c-name { width: 191px; }
.c-val { width: 260px; }
th, td { height: 19px; padding: 1px 2px 0; border: 1px solid #c0c0c0; border-width: 0 1px 1px 0; font-weight: 400; text-align: left; line-height: 16px; white-space: nowrap; }
th { padding: 0; text-align: center; background: linear-gradient(#fdfdfd, #f0f0f0); }
thead th { height: 23px; }
thead .hot { background: linear-gradient(#fad699, #f1c064); color: #5a0a50; }
td.name { padding-left: 20px; }
td.group { padding-left: 2px; }
td.group svg { display: inline-block; width: 12px; height: 12px; margin-right: 6px; vertical-align: -2px; }
.steel { display: inline-block; width: 13px; height: 11px; vertical-align: -2px; }
.key { color: #00f; }
.off td { color: #808080; }
.cur td { background: #d9eaf9; }
.cur th { background: #ffd48a; color: #5a0a50; }
.cur td.name { background: #0078d7; color: #fff; }

/* Section editor window */
.dialog { position: absolute; top: 48px; right: 22px; width: 521px; height: 571px; display: flex; flex-direction: column; padding: 0 7px 7px; border: 1px solid #23282d; background: linear-gradient(#99b4d1, #b9d1ea 30px); box-shadow: inset -1px -1px #5ec8e8, inset 1px 0 #d8e6f4; }
.dialog h2 { height: 30px; padding-top: 11px; }
.client { flex: 1; min-height: 0; display: flex; flex-direction: column; background: #f0f0f0; }
.dtabs { display: flex; align-items: flex-end; height: 22px; }
.dtab { width: 44px; height: 20px; border: 1px solid #dcdcdc; border-bottom: 0; padding-right: 12px; }
.dtab.on { width: 51px; height: 22px; background: #fff; }
.dpane { flex: 1; min-height: 0; display: flex; flex-direction: column; margin: 0 3px 2px 1px; padding: 3px 0 1px 2px; border: 1px solid #dcdcdc; background: #fff; }
.dtools { height: 25px; padding-left: 4px; }
.dtools, .offsets { flex: none; }
.dtools .more { margin-bottom: 8px; }
.grip { flex: none; width: 2px; height: 15px; margin-right: -3px; background: repeating-linear-gradient(#b8b8b8 0 2px, transparent 2px 4px); }
.offsets { height: 29px; padding-left: 4px; gap: 5px; }
.radios { display: flex; gap: 8px; height: 24px; padding: 0 9px 0 2px; align-items: center; background: #f0f0f0; }
.radios label { display: flex; align-items: center; gap: 9px; }
.radios input { appearance: none; width: 11px; height: 11px; border: 1px solid #8a8a8a; border-radius: 50%; background: #fff; }
.radios input:checked { background: radial-gradient(#000 0 2px, #fff 3px); }
.coord { display: flex; align-items: center; gap: 8px; margin-right: 6px; white-space: nowrap; }
.spin { display: flex; align-items: center; width: 78px; height: 23px; border: 1px solid #7a7a7a; padding-right: 4px; }
.spin input { flex: 1; min-width: 0; border: 0; padding: 0 9px 0 0; text-align: right; color: #7a7a7a; background: none; }
.spin svg { width: 6px; height: 16px; }
.canvas { flex: 1; min-height: 0; background: #000; }
.canvas svg { width: 100%; height: 100%; }
.steps { font: 12px "Liberation Sans", sans-serif; fill: #c0c0c0; }
.dims { font: bold 18px "Liberation Serif", serif; fill: #0f0; }
.dfoot { flex: none; height: 27px; padding: 2px; background: #f0f0f0; }
.dyn { width: 58px; height: 23px; border: 1px solid #0078d7; background: #e0eef9; }
.dstatus { display: flex; gap: 2px; height: 22px; }
.dstatus > span { display: flex; align-items: center; gap: 6px; border: 1px solid #d4d4d4; padding: 1px 1px 0; background: linear-gradient(#fbfbfb, #f0f0f0); }
.dstatus > span:first-child { width: 149px; }
.dstatus > span:last-child { flex: 1; }
.size { width: 10px; height: 10px; margin: auto 1px 0 auto; }

/* Status line */
.status { flex: none; display: flex; gap: 2px; height: 22px; padding: 1px 0; }
.status > span { border: 1px solid #d4d4d4; padding: 1px; background: linear-gradient(#fbfbfb, #f0f0f0); line-height: 18px; white-space: nowrap; }
.status > :nth-child(1) { width: 148px; }
.status > :nth-child(2) { width: 78px; }
.status > :nth-child(3) { width: 98px; }
.status > :nth-child(4) { width: 48px; }
.status > :nth-child(5) { flex: 1; }
.status > :nth-child(6) { width: 70px; }

/* Taskbar */
.taskbar { flex: none; display: flex; height: 40px; background: linear-gradient(90deg, #061418, #081b20 70%, #0b0e10); color: #fff; }
.start { width: 48px; background: #080b0c; }
.start svg { width: 16px; height: 16px; margin: auto; }
.cortana { flex: 0 1 344px; display: flex; align-items: center; gap: 9px; padding: 0 14px 0 9px; background: #f2f2f2; }
.cortana svg { width: 22px; height: 22px; }
.cortana .mic { width: 12px; height: 18px; }
.cortana input { flex: 1; min-width: 0; border: 0; padding: 0; background: none; font-size: 14px; }
.cortana input::placeholder { color: #3b3b3b; opacity: 1; }
.apps { flex: 1; display: flex; align-items: center; }
.apps button { width: 47px; height: 40px; margin-right: 4px; }
.apps button svg { width: 24px; height: 24px; margin: auto; }
.apps button .big { width: 28px; height: 28px; }
.apps .run { width: 41px; margin: 0 4px; border-bottom: 2px solid #76b9ed; }
.apps .run.active { width: 48px; margin: 0; background: #3a464b; }
.tsep { flex: none; width: 4px; height: 16px; border: 1px solid #3f4b50; border-width: 0 1px; margin: 0 15px 0 2px; }
.taskscroll { width: 16px; display: flex; flex-direction: column; align-items: center; justify-content: space-between; padding: 6px 0; background: #f0f0f0; }
.taskscroll svg { width: 10px; height: 6px; }
.tray { display: flex; align-items: center; padding-left: 10px; white-space: nowrap; }
.tray .tsep { margin: 0 10px 0 2px; }
.links { margin-right: 23px; }
.two { text-align: center; line-height: 17px; }
.cpu { width: 84px; padding: 0 8px; margin-left: 12px; }
.t12 { width: 12px; height: 12px; margin: 0 11px 0 2px; }
.t16 { width: 16px; height: 16px; margin-right: 8px; }
.t18 { width: 18px; height: 18px; }
.kb { width: 22px; height: 13px; }
.lang { font-size: 13px; margin: 0 15px 0 11px; }
.clock { width: 74px; margin: 0 11px 0 0; }
.desk { width: 1px; height: 40px; margin: 0 5px 0 18px; background: #4b5458; }
```
